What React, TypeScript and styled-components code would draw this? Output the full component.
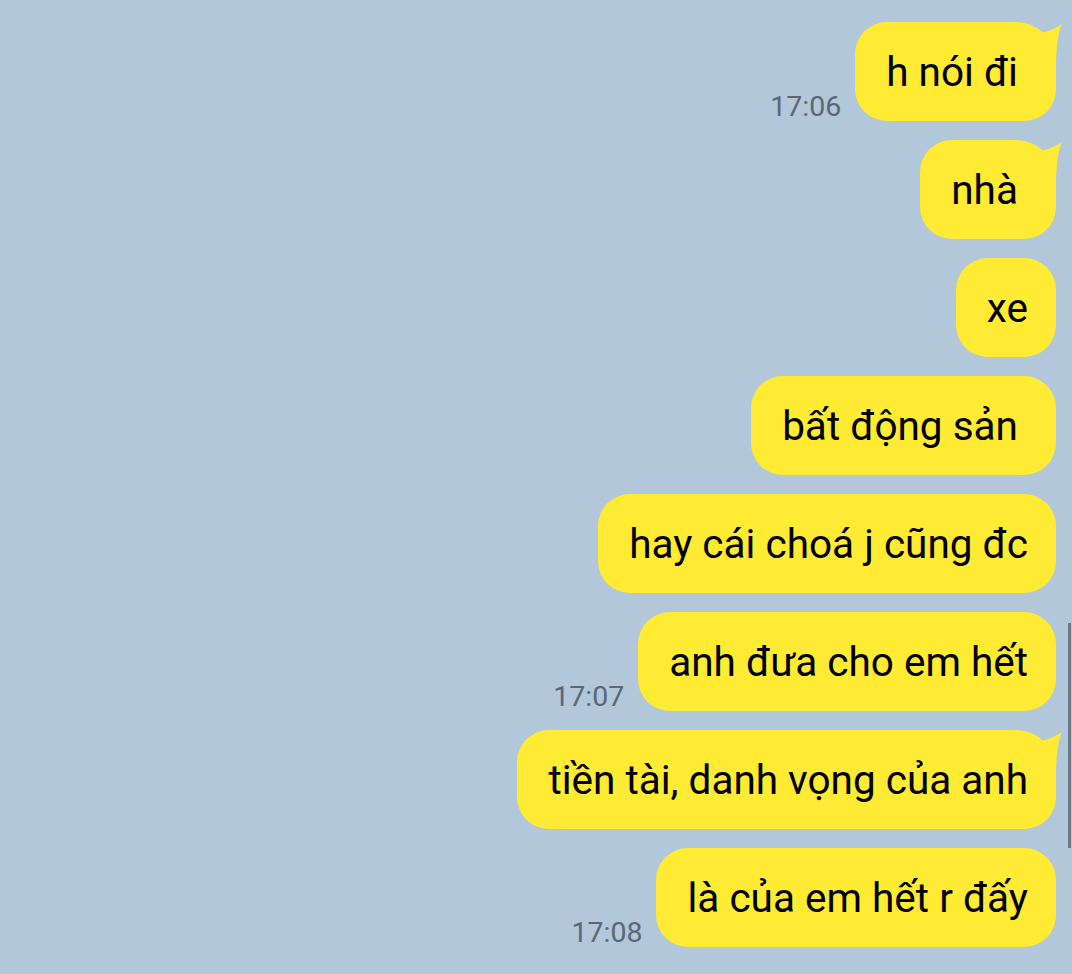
import React from "react";
import styled, { createGlobalStyle } from "styled-components";

const GlobalStyle = createGlobalStyle`
  html, body {
    margin: 0;
    padding: 0;
    background: #b2c7da;
  }
  body {
    font-family: Roboto, "Noto Sans", "Liberation Sans", sans-serif;
    overflow: hidden;
  }
`;

const Chat = styled.div`
  height: 974px;
  box-sizing: border-box;
  display: flex;
  flex-direction: column;
  align-items: flex-end;
  gap: 19px;
  padding: 22px 16px 0 0;
  background: #b2c7da;
`;

const Row = styled.div`
  display: flex;
  align-items: flex-end;
  gap: 14px;
`;

const Time = styled.span`
  font-size: 28.5px;
  line-height: 28.5px;
  color: #5b6775;
`;

const Bubble = styled.div<{ $tail?: boolean }>`
  position: relative;
  height: 99px;
  box-sizing: border-box;
  display: flex;
  align-items: center;
  padding: 0 28px 0 31px;
  border-radius: 32px;
  border-top-right-radius: ${({ $tail }) => ($tail ? "40px" : "32px")};
  background: #ffeb33;
  color: #000;
  font-size: 40.5px;
  white-space: pre;
`;

const Tail = styled.svg`
  position: absolute;
  top: 0;
  right: -6px;
  width: 40px;
  height: 42px;
  overflow: visible;
`;

const ScrollThumb = styled.div`
  position: fixed;
  right: 1px;
  top: 623px;
  width: 3px;
  height: 225px;
  background: #6d7884;
`;

type Msg = { text: string; time?: string; tail?: boolean };

const messages: Msg[] = [
  { text: "h nói đi ", time: "17:06", tail: true },
  { text: "nhà ", tail: true },
  { text: "xe" },
  { text: "bất động sản " },
  { text: "hay cái choá j cũng đc" },
  { text: "anh đưa cho em hết", time: "17:07" },
  { text: "tiền tài, danh vọng của anh", tail: true },
  { text: "là của em hết r đấy", time: "17:08" },
];

export default function App() {
  return (
    <>
      <GlobalStyle />
      <Chat>
        {messages.map((m, i) => (
          <Row key={i}>
            {m.time && <Time>{m.time}</Time>}
            <Bubble $tail={m.tail}>
              {m.text}
              {m.tail && (
                <Tail viewBox="0 0 40 42">
                  <path d="M21,10.5 Q31,8 40,2 Q35,12 34,40 L21,40 Z" fill="#ffeb33" />
                </Tail>
              )}
            </Bubble>
          </Row>
        ))}
      </Chat>
      <ScrollThumb />
    </>
  );
}
